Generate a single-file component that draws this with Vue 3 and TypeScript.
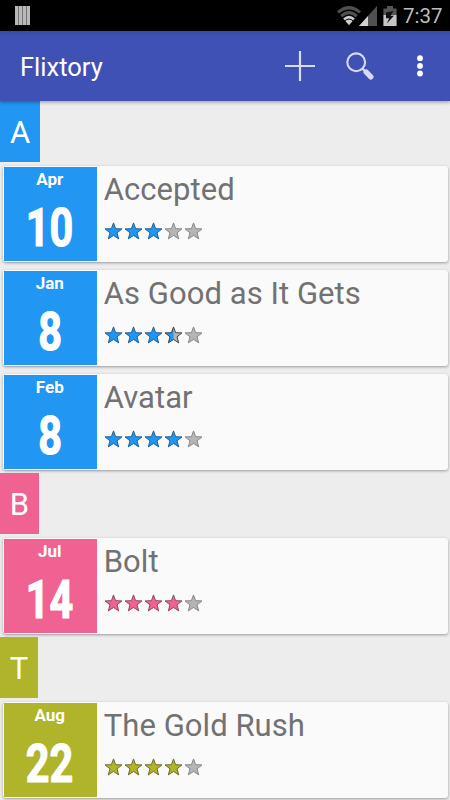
<script setup lang="ts">
interface Movie {
  title: string
  month: string
  day: number
  rating: number
}
interface Section {
  letter: string
  tone: string
  movies: Movie[]
}

const sections: Section[] = [
  {
    letter: 'A',
    tone: 'blue',
    movies: [
      { title: 'Accepted', month: 'Apr', day: 10, rating: 3 },
      { title: 'As Good as It Gets', month: 'Jan', day: 8, rating: 3.5 },
      { title: 'Avatar', month: 'Feb', day: 8, rating: 4 },
    ],
  },
  { letter: 'B', tone: 'pink', movies: [{ title: 'Bolt', month: 'Jul', day: 14, rating: 4 }] },
  { letter: 'T', tone: 'lime', movies: [{ title: 'The Gold Rush', month: 'Aug', day: 22, rating: 4 }] },
]

const starPath = 'M9.5 0.9 L11.6 6.7 L18 6.9 L13 10.8 L14.7 16.9 L9.5 13.4 L4.3 16.9 L6 10.8 L1 6.9 L7.4 6.7 Z'

function starKind(rating: number, position: number): string {
  if (rating >= position) return 'full'
  return rating >= position - 0.5 ? 'half' : 'empty'
}
</script>

<template>
  <div class="screen">
    <header class="status">
      <svg class="bars" width="15" height="19" viewBox="0 0 15 19">
        <path fill="#b9b9b9" d="M0 0h15v19H0z" />
        <path stroke="#747474" stroke-width="1" d="M3.5 0v19M7.5 0v19M11.5 0v19" />
      </svg>
      <div class="indicators">
        <svg width="63" height="22" viewBox="0 0 63 22">
          <path fill="#505050" d="M1 6.200Q13-4.200 25 6.200L23 8.600Q13 0.200 3 8.600Z" />
          <path fill="#505050" d="M4.200 10Q13 2 21.800 10L19.800 12.300Q13 6.200 6.200 12.300Z" />
          <path fill="#cfcfcf" d="M7.200 13.400Q13 8 18.800 13.400L13 20.300Z" />
          <path fill="none" stroke="#000" stroke-width="1" d="M8.800 15.800Q13 12.300 17.200 15.800" />
          <path fill="#505050" d="M41 1V21H23Z" />
          <path fill="#d2d2d2" d="M32 11V21H23Z" />
          <path fill="#555" d="M51 1h6v2.400h3.600V10H47.400V3.400H51z" />
          <path fill="#c6c6c6" d="M47.400 10H60.600V21H47.400z" />
          <path fill="#111" d="M57.500 6L50 7.600V13.300H53.200L50.800 18.600L58 10.800H54.600z" />
        </svg>
        <span class="clock">7:37</span>
      </div>
    </header>

    <nav class="toolbar">
      <h1 class="app-name">Flixtory</h1>
      <div class="actions">
        <svg width="30" height="30" viewBox="0 0 30 30">
          <path fill="none" stroke="#d9dcf0" stroke-width="2.200" d="M15 0V30M0 15H30" />
        </svg>
        <svg class="search" width="28" height="28" viewBox="0 0 28 28">
          <circle cx="10.200" cy="10.300" r="8.900" fill="none" stroke="#d9dcf0" stroke-width="2.100" />
          <path fill="none" stroke="#d9dcf0" stroke-width="2.200" d="M16.400 16.600L20 20" />
          <path fill="none" stroke="#d9dcf0" stroke-width="5.400" stroke-linecap="round" d="M20.200 20L24.800 24.800" />
        </svg>
        <svg class="more" width="6" height="22" viewBox="0 0 6 22" fill="#fff">
          <circle cx="3" cy="3.200" r="2.900" />
          <circle cx="3" cy="10.900" r="2.900" />
          <circle cx="3" cy="18.500" r="2.900" />
        </svg>
      </div>
    </nav>

    <main class="list">
      <section v-for="section in sections" :key="section.letter" :class="['section', section.tone]">
        <h2 class="letter">{{ section.letter }}</h2>
        <article v-for="movie in section.movies" :key="movie.title" class="card">
          <div class="date">
            <span class="month">{{ movie.month }}</span>
            <span class="day">{{ movie.day }}</span>
          </div>
          <div class="info">
            <h3 class="title">{{ movie.title }}</h3>
            <div class="stars">
              <svg v-for="n in 5" :key="n" :class="['star', starKind(movie.rating, n)]" width="20" height="19" viewBox="0 0 20 19">
                <path class="body" :d="starPath" />
                <path v-if="starKind(movie.rating, n) === 'half'" class="left" d="M9.5 0.900V13.400L4.300 16.900L6 10.800L1 6.900L7.400 6.700Z" />
                <path class="edge" :d="starPath" />
              </svg>
            </div>
          </div>
        </article>
      </section>
    </main>
  </div>
</template>

<style>
body {
  margin: 0;
  overflow: hidden;
}
</style>

<style scoped>
.screen {
  width: 450px;
  height: 800px;
  overflow: hidden;
  display: flex;
  flex-direction: column;
  background: #ededed;
  font-family: Roboto, 'Liberation Sans', sans-serif;
}
h1, h2, h3 {
  margin: 0;
  font-weight: 400;
}
svg {
  display: block;
}
.status {
  flex: none;
  box-sizing: border-box;
  height: 31px;
  padding: 0 7.500px 0 15px;
  display: flex;
  align-items: center;
  justify-content: space-between;
  background: #000;
}
.indicators {
  display: flex;
  align-items: center;
  gap: 4px;
}
.clock {
  color: #bdbdbd;
  font-size: 20.500px;
  line-height: 31px;
  padding-top: 1px;
}
.toolbar {
  flex: none;
  box-sizing: border-box;
  height: 70px;
  padding: 0 27px 0 20px;
  display: flex;
  align-items: center;
  justify-content: space-between;
  background: linear-gradient(#394aa6, #3f51b5 6px);
  box-shadow: 0 1px 4px rgba(0, 0, 0, 0.4);
  z-index: 1;
}
.app-name {
  color: #fff;
  font-size: 25.500px;
  line-height: 30px;
  padding-top: 2px;
}
.actions {
  display: flex;
  align-items: center;
}
.search {
  margin-left: 31px;
}
.more {
  margin-left: 43px;
}
.list {
  display: flex;
  flex-direction: column;
  gap: 3.700px;
}
.section {
  display: flex;
  flex-direction: column;
  align-items: flex-start;
}
.blue { --tone: #2196f3; --edge: #245f8f; --tab: 40px; }
.pink { --tone: #f06292; --edge: #8b4b62; --tab: 39px; }
.lime { --tone: #afb42b; --edge: #6c6f2b; --tab: 38px; }
.letter {
  width: var(--tab);
  height: 60.500px;
  line-height: 63px;
  text-align: center;
  color: #fff;
  font-size: 31px;
  background: var(--tone);
  margin-bottom: 4px;
}
.card {
  box-sizing: border-box;
  width: 445px;
  height: 96px;
  margin-left: 2.500px;
  padding: 1px;
  display: flex;
  background: #fafafa;
  border-radius: 3px;
  box-shadow: 0 1px 3px rgba(0, 0, 0, 0.36);
}
.card + .card {
  margin-top: 8px;
}
.date {
  flex: none;
  width: 93.500px;
  height: 94px;
  display: flex;
  flex-direction: column;
  align-items: center;
  background: var(--tone);
  color: #fff;
  font-weight: 700;
}
.month {
  font-size: 17px;
  line-height: 20px;
  padding: 2.500px 1px 0 0;
}
.day {
  font-size: 53px;
  line-height: 62px;
  margin: 7.500px 1px 0 0;
  transform: scaleX(0.780);
  -webkit-text-stroke: 1.200px #fff;
}
.info {
  padding-left: 6.700px;
}
.title {
  color: #727272;
  font-size: 31px;
  line-height: 36px;
  margin-top: 5px;
  letter-spacing: 0.060px;
  white-space: nowrap;
}
.stars {
  display: flex;
  margin-top: 14px;
}
.body { fill: #b5b5b5; }
.edge { fill: none; stroke: #888; stroke-width: 1; }
.full .body, .left { fill: var(--tone); }
.full .edge { stroke: var(--edge); }
.half .edge { stroke: #444; }
</style>
